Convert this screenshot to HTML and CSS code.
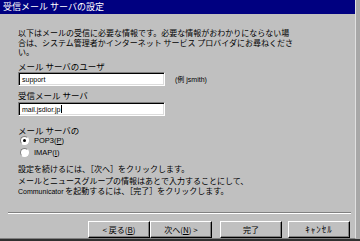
FILE: index.html
```html
<!DOCTYPE html>
<html lang="ja">
<head>
    <meta charset="UTF-8">
    <title>受信メール サーバの設定</title>
    <link rel="stylesheet" href="styles.css">
</head>
<body>
    <div class="window">
        <div class="titlebar">受信メール サーバの設定</div>

        <div class="content">
            <!-- 説明文 -->
            <p class="intro">以下はメールの受信に必要な情報です。必要な情報がおわかりにならない場<br>合は、システム管理者かインターネット サービス プロバイダにお尋ねくださ<br>い。</p>

            <p class="label label-first">メール サーバのユーザ</p>
            <div class="field-row">
                <div class="textbox">support</div>
                <span class="hint">(例 jsmith)</span>
            </div>

            <p class="label">受信メール サーバ</p>
            <div class="field-row field-row-2">
                <div class="textbox">mail.jsdior.jp<span class="caret"></span></div>
            </div>

            <p class="label label-type">メール サーバの</p>
            <div class="radio-row">
                <span class="radio checked"></span>
                <span class="latin">POP3(<u>P</u>)</span>
            </div>
            <div class="radio-row">
                <span class="radio"></span>
                <span class="latin">IMAP(<u>I</u>)</span>
            </div>

            <p class="note note-first">設定を続けるには、［次へ］をクリックします。</p>
            <p class="note note-block">メールとニュースグループの情報はあとで入力することにして、<br><span class="latin">Communicator</span> を起動するには、［完了］をクリックします。</p>
        </div>

        <div class="separator"></div>

        <div class="buttons">
            <button class="btn btn-back">&lt; 戻る(<u>B</u>)</button>
            <button class="btn">次へ(<u>N</u>) &gt;</button>
            <button class="btn btn-gap">完了</button>
            <button class="btn btn-cancel">ｷｬﾝｾﾙ</button>
        </div>
    </div>
</body>
</html>
```

FILE: styles.css
```css
/* ウィザード風ダイアログ */
body {
    margin: 0;
    background-color: #303030;
    font-family: "Noto Sans CJK JP", sans-serif;
    font-size: 8px;
    color: #000;
}

.window {
    width: 355px;
    height: 238px;
    background-color: #c0c0c0;
    border-right: 1px solid #e0e0e0;
    border-bottom: 1px solid #808080;
    box-shadow: 4px 0 0 #a8a8a8;
    display: flex;
    flex-direction: column;
}

.titlebar {
    height: 14px;
    line-height: 14px;
    background-color: #000080;
    color: #fff;
    font-size: 9px;
    padding-left: 3px;
}

.content {
    padding: 0 18px;
}

.intro {
    margin: 14px 0 0;
    line-height: 9.5px;
    white-space: nowrap;
}

.label {
    margin: 4px 0 0;
    line-height: 10px;
    font-size: 8.5px;
}

.label-type {
    margin-top: 9px;
}

.field-row {
    display: flex;
    align-items: center;
    margin-top: 1px;
}

.field-row-2 {
    margin-top: 2px;
}

.textbox {
    width: 142px;
    height: 10px;
    line-height: 10px;
    padding: 2px 0 0 3px;
    background-color: #fff;
    border-top: 1px solid #808080;
    border-left: 1px solid #808080;
    border-bottom: 1px solid #fff;
    border-right: 1px solid #fff;
    box-shadow: inset 1px 1px 0 #000, inset -1px -1px 0 #dcdcdc;
    font-family: "Liberation Sans", sans-serif;
    font-size: 7px;
}

.caret {
    display: inline-block;
    width: 1px;
    height: 8px;
    background-color: #000;
    vertical-align: -1px;
}

.hint {
    margin-left: 10px;
    font-family: "Liberation Sans", "Noto Sans CJK JP", sans-serif;
    font-size: 7px;
}

.radio-row {
    display: flex;
    align-items: center;
    gap: 5px;
    height: 12px;
    padding-left: 2px;
}

.radio {
    width: 7px;
    height: 7px;
    border-radius: 50%;
    background-color: #fff;
    border: 1px solid;
    border-color: #808080 #fff #fff #808080;
    display: flex;
    align-items: center;
    justify-content: center;
}

.radio.checked::after {
    content: "";
    width: 3px;
    height: 3px;
    border-radius: 50%;
    background-color: #000;
}

.latin {
    font-family: "Liberation Sans", sans-serif;
    font-size: 7.5px;
}

.note {
    margin: 0;
    line-height: 10px;
}

.note-first {
    margin-top: 5px;
}

.note-block {
    margin-top: 2px;
}

.note-block .latin {
    font-size: 7px;
}

.separator {
    margin: 15px 4px 0 8px;
    border-top: 1px solid #808080;
    border-bottom: 1px solid #fff;
}

.buttons {
    display: flex;
    margin-top: 7px;
    padding-left: 88px;
}

.btn {
    width: 62px;
    height: 17px;
    padding: 0;
    background-color: #c0c0c0;
    border-top: 1px solid #fff;
    border-left: 1px solid #fff;
    border-right: 1px solid #000;
    border-bottom: 1px solid #000;
    box-shadow: inset -1px -1px 0 #808080;
    font-family: "Noto Sans CJK JP", sans-serif;
    font-size: 8px;
    color: #000;
}

.btn-gap {
    margin-left: 8px;
}

.btn-cancel {
    margin-left: 6px;
    font-size: 9px;
    letter-spacing: 1px;
}
```
